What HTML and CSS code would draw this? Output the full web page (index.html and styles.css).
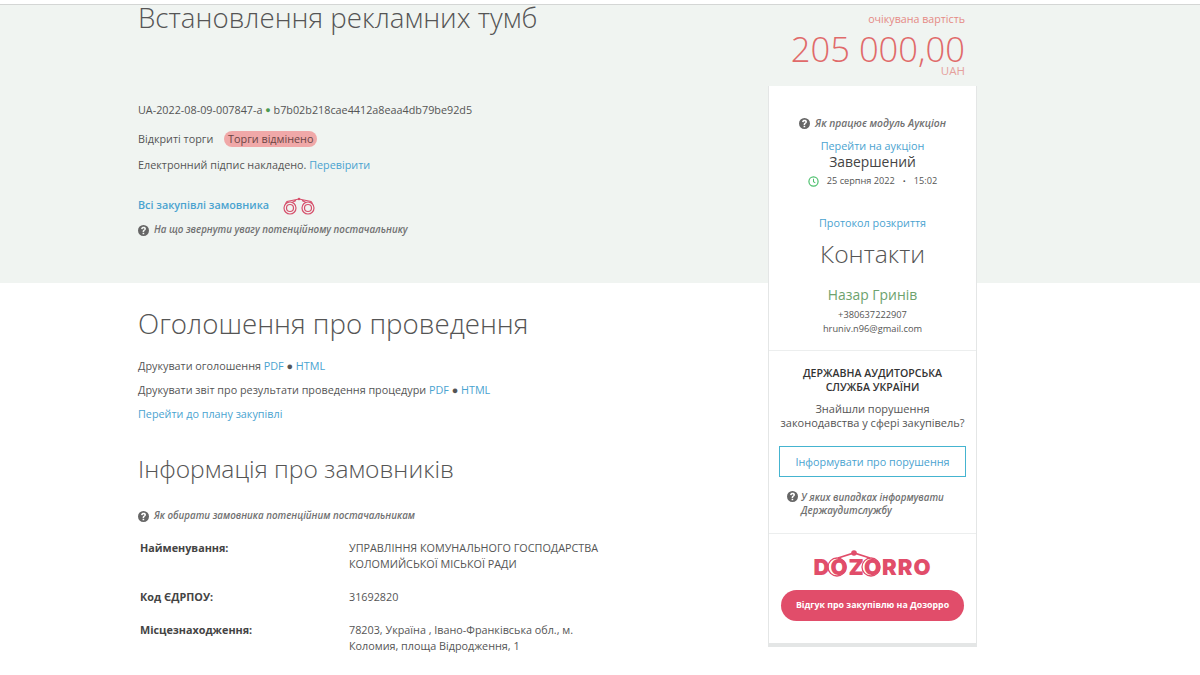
FILE: index.html
```html
<!DOCTYPE html>
<html lang="uk">
<head>
<meta charset="utf-8">
<title>Встановлення рекламних тумб</title>
<link rel="stylesheet" href="styles.css">
</head>
<body>
<svg class="defs" width="0" height="0" aria-hidden="true">
  <symbol id="q" viewBox="0 0 24 24"><path fill="currentColor" fill-rule="evenodd" d="M12 0a12 12 0 1 0 0 24 12 12 0 0 0 0-24zm-1.900 15h3.400v-.9c0-.8.4-1.200 1.500-2 1.300-1 2.400-2 2.400-3.900C17.400 5.400 15 4 12.200 4 9.300 4 7 5.400 6.700 8.500l3.400.5c.1-1.300.9-2 2-2 1 0 1.800.6 1.800 1.500 0 .8-.5 1.200-1.400 1.900-1.400 1-2.400 1.900-2.400 3.700zm-.1 1.800V20h3.600v-3.200z"/></symbol>
</svg>
<div class="page">
  <main class="main">
    <section class="hero">
      <h1 class="title">Встановлення рекламних тумб</h1>
      <p class="ids">UA-2022-08-09-007847-a <span class="dot">●</span> b7b02b218cae4412a8eaa4db79be92d5</p>
      <p class="type">Відкриті торги <span class="badge">Торги відмінено</span></p>
      <p class="sign">Електронний підпис накладено. <a class="link">Перевірити</a></p>
      <p class="buyer"><a class="link strong">Всі закупівлі замовника</a>
        <svg class="binoculars" viewBox="0 0 32 18" width="32" height="18"><g fill="none" stroke="#d6506c" stroke-width="1.200"><circle cx="7" cy="11" r="6"/><circle cx="7" cy="11" r="3.500"/><circle cx="25" cy="11" r="6"/><circle cx="25" cy="11" r="3.500"/><path d="M2.500 6.500 4 4.500l12-2.500 12 2.500 1.500 2M9 5.500l4-2M23 5.500l-4-2"/></g><circle cx="16" cy="2" r="1.300" fill="#d6506c"/></svg>
      </p>
      <p class="hint"><svg class="q"><use href="#q"/></svg>На що звернути увагу потенційному постачальнику</p>
    </section>
    <section class="notice">
      <h2 class="h2">Оголошення про проведення</h2>
      <p class="row">Друкувати оголошення <a class="link">PDF</a> ● <a class="link">HTML</a></p>
      <p class="row">Друкувати звіт про результати проведення процедури <a class="link">PDF</a> ● <a class="link">HTML</a></p>
      <p class="row"><a class="link">Перейти до плану закупівлі</a></p>
    </section>
    <section class="buyers">
      <h3 class="h3">Інформація про замовників</h3>
      <p class="hint hint-b"><svg class="q"><use href="#q"/></svg>Як обирати замовника потенційним постачальникам</p>
      <dl class="info">
        <dt>Найменування:</dt><dd>УПРАВЛІННЯ КОМУНАЛЬНОГО ГОСПОДАРСТВА КОЛОМИЙСЬКОЇ МІСЬКОЇ РАДИ</dd>
        <dt>Код ЄДРПОУ:</dt><dd>31692820</dd>
        <dt>Місцезнаходження:</dt><dd>78203, Україна , Івано-Франківська обл., м. Коломия, площа Відродження, 1</dd>
      </dl>
    </section>
  </main>
  <aside class="side">
    <div class="price">
      <div class="price-label">очікувана вартість</div>
      <div class="price-value">205 000,00</div>
      <div class="price-cur">UAH</div>
    </div>
    <div class="card">
      <div class="block">
        <p class="hint hint-c"><svg class="q"><use href="#q"/></svg>Як працює модуль Аукціон</p>
        <a class="link auction">Перейти на аукціон</a>
        <div class="status">Завершений</div>
        <div class="date">
          <svg class="clock" viewBox="0 0 12 12" width="11" height="11"><circle cx="6" cy="6" r="5" fill="none" stroke="#4cc06d" stroke-width="1.300"/><path d="M6 3v3.300l2 1.200" fill="none" stroke="#4cc06d" stroke-width="1.100"/></svg>
          <span>25 серпня 2022</span><span class="sep">•</span><span>15:02</span>
        </div>
        <a class="link protocol">Протокол розкриття</a>
        <div class="contacts">Контакти</div>
        <div class="person">Назар Гринів</div>
        <div class="phone">+380637222907</div>
        <div class="mail">hruniv.n96@gmail.com</div>
      </div>
      <div class="block audit">
        <div class="audit-title">ДЕРЖАВНА АУДИТОРСЬКА<br>СЛУЖБА УКРАЇНИ</div>
        <div class="audit-text">Знайшли порушення законодавства у сфері закупівель?</div>
        <a class="report">Інформувати про порушення</a>
        <p class="hint hint-d"><svg class="q"><use href="#q"/></svg><span>У яких випадках інформувати Держаудитслужбу</span></p>
      </div>
      <div class="block dz">
        <div class="logo">
          <span class="logo-text">DOZORRO</span>
          <svg class="logo-arc" viewBox="0 0 120 28" width="120" height="28" aria-hidden="true"><g fill="none" stroke="#e14d6a"><circle cx="24" cy="18" r="9" stroke-width="1.300"/><circle cx="58" cy="18" r="9" stroke-width="1.300"/><path d="M25 9l16-5 16 5" stroke-width="1.800"/></g><circle cx="41" cy="4" r="2.800" fill="#e14d6a"/></svg>
        </div>
        <a class="dz-btn">Відгук про закупівлю на Дозорро</a>
      </div>
    </div>
  </aside>
</div>
</body>
</html>
```
FILE: styles.css
```css
* { box-sizing: border-box; }
html, body { margin: 0; padding: 0; height: 675px; overflow: hidden; background: #fff; }
body { font-family: "Open Sans", sans-serif; font-size: 10.800px; color: #555; padding-top: 4px; }
.defs { position: absolute; }
p, h1, h2, h3, dl, dd { margin: 0; }
.link { color: #4aa3d0; }
.q { width: 11px; height: 11px; color: #666; flex: none; }

.page { display: flex; height: 671px; padding-left: 138px; border-top: 1px solid #d4d6d5;
  background: linear-gradient(#f0f4f1 278px, #fff 278px); }
.main { width: 630px; flex: none; }
.side { width: 209px; flex: none; }

.hero { height: 278px; }
.title { font-size: 27.700px; font-weight: 300; line-height: 36px; color: #555; margin-top: -6px; }
.ids { margin-top: 66px; line-height: 18px; }
.dot { color: #4c9a50; font-size: 9px; vertical-align: 1px; line-height: 1; }
.type { margin-top: 11px; line-height: 18px; }
.badge { background: #f0a8a8; border-radius: 8px; padding: 0 4px; margin-left: 8px; display: inline-block; color: #6a4444; line-height: 16px; }
.sign { margin-top: 8px; line-height: 18px; }
.buyer { margin-top: 20px; line-height: 18px; display: flex; align-items: center; gap: 14px; }
.strong { font-weight: 600; }
.binoculars { margin-top: 3px; }
.hint { font-style: italic; font-weight: 600; font-size: 9.750px; color: #717171; display: flex; align-items: center; gap: 5px; line-height: 16px; }
.hero .hint { margin-top: 7px; }

.notice { padding-top: 28px; }
.h2 { font-size: 27.700px; font-weight: 300; line-height: 36px; }
.row { line-height: 18px; margin-bottom: 6px; }
.row:first-of-type { margin-top: 16px; }

.buyers { padding-top: 25px; }
.h3 { font-size: 24.600px; font-weight: 300; line-height: 30px; }
.hint-b { margin-top: 24px; }
.info { display: grid; grid-template-columns: 209px 262px; margin: 16px 0 0 2px; row-gap: 17px; line-height: 16px; }
.info dt { font-weight: 700; color: #444; }

.price { height: 81px; padding-right: 12px; text-align: right; color: #e06a6a; }
.price-label { font-size: 10.700px; line-height: 16px; padding-top: 6px; height: 22px; color: #e58a85; }
.price-value { font-size: 34.600px; font-weight: 300; line-height: 34px; margin-top: 5px; }
.price-cur { font-size: 11.500px; line-height: 10px; color: #e5a09c; }

.card { background: #fff; border: 1px solid #e4e6e6; border-bottom: 4px solid #e4e6e6; border-top: 0; height: 561px; text-align: center; }
.block { border-bottom: 1px solid #eceeee; }
.block:last-child { border-bottom: 0; }
.block:first-child { height: 265px; padding-top: 29px; }
.hint-c { justify-content: center; gap: 5px; font-size: 10.300px; }
.auction, .protocol { display: block; line-height: 18px; }
.auction { margin-top: 6px; }
.status { font-size: 13.900px; line-height: 16px; color: #444; margin-top: -1px; }
.date { display: flex; justify-content: center; align-items: center; font-size: 9.200px; gap: 8px; margin-top: 2px; line-height: 18px; }
.sep { font-size: 8px; }
.protocol { margin-top: 24px; }
.contacts { font-size: 24.700px; font-weight: 300; line-height: 36px; margin-top: 4px; }
.person { font-size: 13.900px; line-height: 20px; color: #6da26d; margin-top: 13px; }
.phone, .mail { font-size: 9.250px; line-height: 14px; }
.phone { margin-top: 3px; }

.audit { height: 183px; padding: 15px 10px 0; }
.audit-title { font-weight: 600; font-size: 10.600px; line-height: 14px; color: #333; }
.audit-text { line-height: 14px; margin-top: 8px; font-size: 11px; }
.report { display: block; height: 31px; margin-top: 16px; border: 1px solid #45b4d0; color: #4aa3d0; font-size: 10.800px; line-height: 29px; }
.hint-d { align-items: flex-start; text-align: left; gap: 3px; margin: 14px 0 0 8px; line-height: 13px; }
.hint-d .q { margin-top: 0; }

.dz { padding-top: 15px; }
.logo { position: relative; width: 120px; height: 28px; margin: 0 auto; }
.logo-text { display: block; font-family: "Inter", sans-serif; font-weight: 900; font-size: 22px; line-height: 36px; color: #e14d6a; letter-spacing: 1px; }
.logo-arc { position: absolute; left: 0; top: 0; }
.dz-btn { display: block; height: 31px; margin: 13px 12px 0; border-radius: 16px; background: #e14d6a; color: #fff; font-size: 8.800px; font-weight: 700; line-height: 31px; }
```
